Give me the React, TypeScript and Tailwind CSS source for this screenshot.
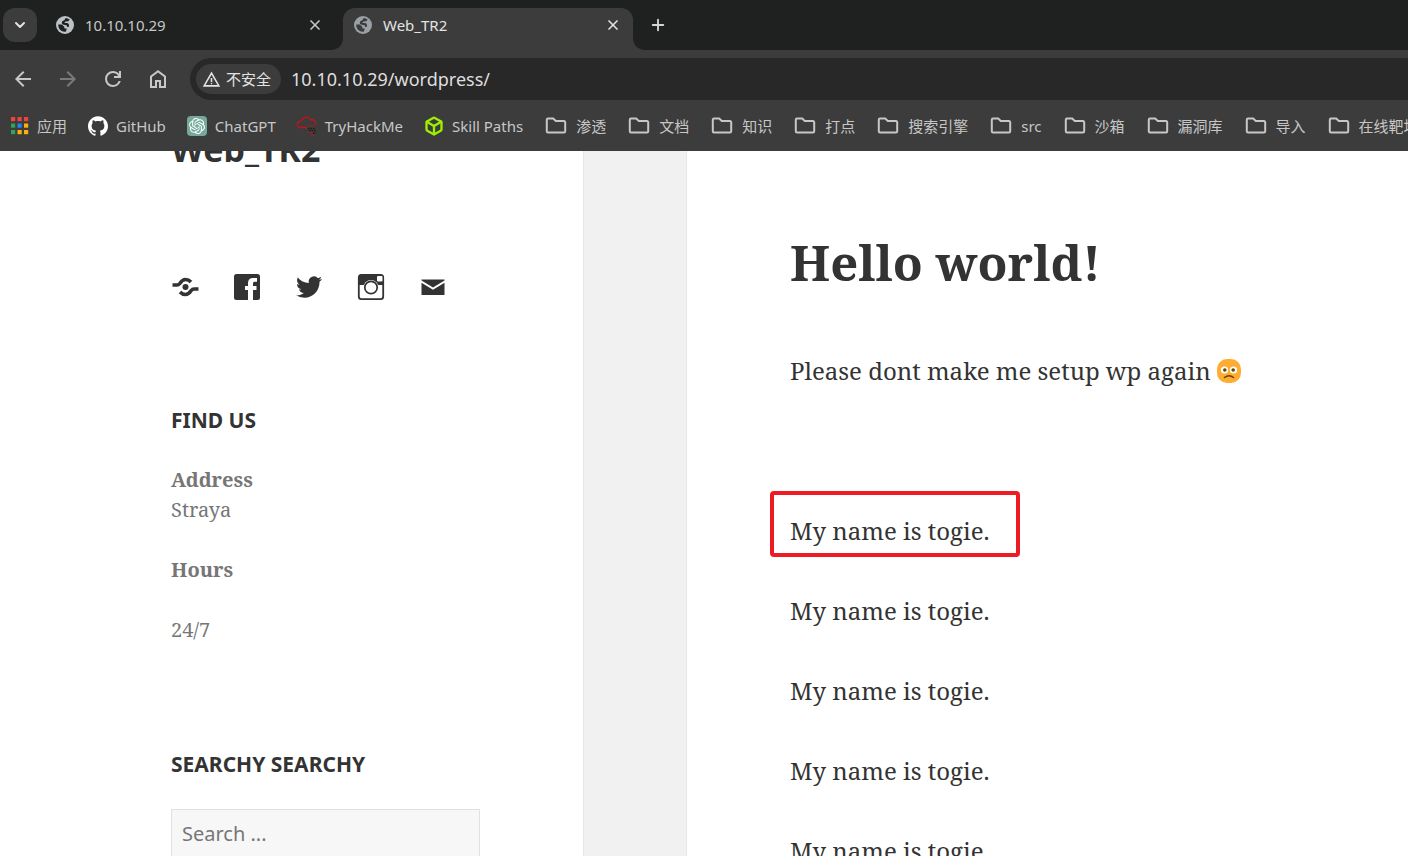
import { useId, type ReactNode } from "react";
import { Box, ChevronDown, Plus, X } from "lucide-react";
import { SiGithub, SiOpenai } from "react-icons/si";

const uiFont = "font-['Noto_Sans','Noto_Sans_CJK_SC',sans-serif]";
const serif = "font-['Noto_Serif','DejaVu_Serif',serif]";

function Symbol({ d, className }: { d: string; className?: string }) {
  return (
    <svg viewBox="0 -960 960 960" fill="currentColor" className={className} aria-hidden="true">
      <path d={d} />
    </svg>
  );
}

const paths = {
  back: "m313-440 224 224-57 56-320-320 320-320 57 56-224 224h487v80H313Z",
  forward: "M647-440H160v-80h487L423-744l57-56 320 320-320 320-57-56 224-224Z",
  reload:
    "M480-160q-134 0-227-93t-93-227q0-134 93-227t227-93q69 0 132 28.5T720-690v-110h80v280H520v-80h168q-32-56-87.5-88T480-720q-100 0-170 70t-70 170q0 100 70 170t170 70q77 0 139-44t87-116h84q-28 106-114 173t-196 67Z",
  home: "M240-200h120v-240h240v240h120v-360L480-740 240-560v360Zm-80 80v-480l320-240 320 240v480H520v-240h-80v240H160Z",
  warning:
    "m40-120 440-760 440 760H40Zm138-80h604L480-720 178-200Zm302-40q17 0 28.500-11.500T520-280q0-17-11.500-28.500T480-320q-17 0-28.500 11.500T440-280q0 17 11.500 28.500T480-240Zm-40-120h80v-200h-80v200Z",
};

function Globe({ className }: { className?: string }) {
  const id = useId();
  return (
    <svg viewBox="0 0 18 18" className={className} aria-hidden="true">
      <mask id={id}>
        <rect width="18" height="18" fill="#fff" />
        <path d="M9.200 2.200C11 2 12.800 2.700 13.800 3.600L12.200 5.200 9.500 5.600 8.300 7H11c1.300.2 2 1 2 2.200v1.300L11 11.200V9.500L6.800 8.600C5.600 8 5.600 6.200 6.300 5.200L8.600 4Z" fill="#000" />
        <path d="M2.200 8.600h3.600L8.300 10.800v1.500l2.500.4-1 3C5.500 16.200 2.200 13.200 2.200 8.600Z" fill="#000" />
      </mask>
      <circle cx="9" cy="9" r="9" fill="currentColor" mask={`url(#${id})`} />
    </svg>
  );
}

function TabFoot({ side }: { side: "left" | "right" }) {
  return (
    <svg viewBox="0 0 12 12" className="size-3 shrink-0 self-end fill-[#3c3c3c]" aria-hidden="true">
      <path d={side === "left" ? "M12 0v12H0C7 12 12 7 12 0Z" : "M0 0v12h12C5 12 0 7 0 0Z"} />
    </svg>
  );
}

function FolderIcon() {
  return (
    <svg viewBox="0 0 22 20" className="h-5 w-[22px] shrink-0" fill="none" stroke="currentColor" strokeWidth="2" aria-hidden="true">
      <path d="M3 2.500h5.200l2.600 2.500H19a1.200 1.200 0 0 1 1.200 1.200v9.100a1.200 1.200 0 0 1-1.200 1.200H3a1.200 1.200 0 0 1-1.200-1.200V3.700A1.200 1.200 0 0 1 3 2.500Z" />
    </svg>
  );
}

function AppsIcon() {
  const colors = ["#f0443a", "#f0443a", "#f0443a", "#2fa455", "#2186f3", "#fcb10a", "#2fa455", "#fcb10a", "#fcb10a"];
  return (
    <svg viewBox="0 0 20 20" className="size-5 shrink-0" aria-hidden="true">
      {colors.map((c, i) => (
        <rect key={i} x={2 + (i % 3) * 6.5} y={1 + Math.floor(i / 3) * 6.5} width="4.200" height="4.200" fill={c} />
      ))}
    </svg>
  );
}

function CloudIcon() {
  return (
    <svg viewBox="0 0 20 20" className="size-5 shrink-0" fill="none" stroke="#c4121b" aria-hidden="true">
      <path strokeWidth="1.300" d="M10 11.500H3.500A3 3 0 0 1 3 5.500 3 3 0 0 1 5 4 4.600 4.600 0 0 1 13.500 4 4 4 0 0 1 18.800 8.500" />
      <path strokeWidth="1" strokeDasharray="2 .8" d="M11 10h8M10.500 16.500h5M14 19h4" />
      <path strokeWidth="1.300" strokeDasharray="1.500 1" stroke="#1e1e1e" d="M11 12.500h7M12 14.500h7M16 17h3" />
    </svg>
  );
}

const sites: { label: string; icon: ReactNode }[] = [
  { label: "应用", icon: <AppsIcon /> },
  { label: "GitHub", icon: <SiGithub className="size-5 shrink-0 text-white" /> },
  {
    label: "ChatGPT",
    icon: (
      <span className="flex size-5 shrink-0 items-center justify-center rounded-sm bg-[#74a99b]">
        <SiOpenai className="size-4 text-white" />
      </span>
    ),
  },
  { label: "TryHackMe", icon: <CloudIcon /> },
  { label: "Skill Paths", icon: <Box className="size-5 shrink-0 text-[#9fef00]" strokeWidth={2.8} /> },
];

const folders = ["渗透", "文档", "知识", "打点", "搜索引擎", "src", "沙箱", "漏洞库", "导入", "在线靶场"];

function TabStrip() {
  return (
    <div className="flex h-[50px] shrink-0 items-stretch bg-[#1f2120] text-[15px] text-[#c7c7c7]">
      <button aria-label="Search tabs" className="ml-[3px] mt-2 flex size-[34px] items-center justify-center rounded-xl bg-[#3c3c3c] text-[#e3e3e3]">
        <ChevronDown className="size-4" strokeWidth={3} />
      </button>
      <div className="flex w-[294px] items-center gap-[11px] pl-[19px] pr-2">
        <Globe className="size-[18px] shrink-0 text-[#bdc1c6]" />
        <span className="flex-1">10.10.10.29</span>
        <button aria-label="Close 10.10.10.29">
          <X className="size-4" strokeWidth={2.5} />
        </button>
      </div>
      <TabFoot side="left" />
      <div className="mt-2 flex w-[290px] items-center gap-[11px] rounded-t-xl bg-[#3c3c3c] pb-2 pl-[11px] pr-3 text-[#e3e3e3]">
        <Globe className="size-[18px] shrink-0 text-[#9aa0a6]" />
        <span className="flex-1">Web_TR2</span>
        <button aria-label="Close Web_TR2">
          <X className="size-4" strokeWidth={2.5} />
        </button>
      </div>
      <TabFoot side="right" />
      <button aria-label="New tab" className="ml-1 text-[#d5d5d5]">
        <Plus className="size-[18px]" strokeWidth={2.5} />
      </button>
    </div>
  );
}

function Toolbar() {
  return (
    <div className="flex h-[58px] shrink-0 items-center pl-[11px] text-[#c7c7c7]">
      <div className="flex items-center gap-[21px]">
        <button aria-label="Back"><Symbol d={paths.back} className="size-6" /></button>
        <button aria-label="Forward" className="text-[#7a7a7a]"><Symbol d={paths.forward} className="size-6" /></button>
        <button aria-label="Reload"><Symbol d={paths.reload} className="size-6" /></button>
        <button aria-label="Home"><Symbol d={paths.home} className="size-6" /></button>
      </div>
      <div className="ml-5 flex h-[42px] flex-1 items-center rounded-l-full bg-[#282828] pl-[6px]">
        <button className="flex h-[30px] shrink-0 items-center gap-[5px] rounded-full bg-[#3c3c3c] pl-[6px] pr-[10px] text-[15px] text-[#e3e3e3]">
          <Symbol d={paths.warning} className="size-[19px]" />
          不安全
        </button>
        <input
          aria-label="Address"
          defaultValue="10.10.10.29/wordpress/"
          className="ml-[10px] min-w-0 flex-1 bg-transparent text-lg text-[#dedede] outline-none"
        />
      </div>
    </div>
  );
}

function Bookmarks() {
  return (
    <nav aria-label="Bookmarks" className="flex h-[43px] shrink-0 items-center gap-[22px] overflow-hidden whitespace-nowrap pb-[7px] pl-[9px] text-[15px] text-[#c7c7c7]">
      <div className="flex items-center gap-[21px]">
        {sites.map((s) => (
          <a key={s.label} href="#" className="flex items-center gap-2">
            {s.icon}
            {s.label}
          </a>
        ))}
      </div>
      {folders.map((f) => (
        <button key={f} className="flex shrink-0 items-center gap-[9px]">
          <FolderIcon />
          {f}
        </button>
      ))}
    </nav>
  );
}

const social: { label: string; art: ReactNode }[] = [
  {
    label: "Share",
    art: (
      <>
        <circle cx="14.500" cy="14" r="3" />
        <path fill="none" stroke="currentColor" strokeWidth="3.600" d="M1.500 12H6c1.500 0 2-.5 2.800-1.500C10.300 8.200 12 6.500 14.500 6.500c2.200 0 4 .9 5.500 2.500M27.500 16H23c-1.500 0-2 .5-2.800 1.500C18.700 19.800 17 21.500 14.500 21.500c-2.200 0-4-.9-5.500-2.500" />
      </>
    ),
  },
  {
    label: "Facebook",
    art: <path d="M3.500 1h21A2.500 2.500 0 0 1 27 3.500v21a2.500 2.500 0 0 1-2.500 2.500H20V17h3.500v-4H20v-2.500c0-1.200.6-1.700 1.800-1.700H24V5h-3.800c-3.400 0-5.200 1.900-5.200 5v3h-3v4h3v10H3.500A2.500 2.500 0 0 1 1 24.500v-21A2.500 2.500 0 0 1 3.500 1Z" />,
  },
  {
    label: "Twitter",
    art: (
      <path
        transform="translate(1 1) scale(1.090)"
        d="M23.953 4.570a10 10 0 0 1-2.825.775 4.958 4.958 0 0 0 2.163-2.723c-.951.555-2.005.959-3.127 1.184a4.920 4.920 0 0 0-8.384 4.482C7.690 8.095 4.067 6.130 1.640 3.162a4.822 4.822 0 0 0-.666 2.475c0 1.710.870 3.213 2.188 4.096a4.904 4.904 0 0 1-2.228-.616v.060a4.923 4.923 0 0 0 3.946 4.827 4.996 4.996 0 0 1-2.212.085 4.936 4.936 0 0 0 4.604 3.417 9.867 9.867 0 0 1-6.102 2.105c-.390 0-.779-.023-1.170-.067a13.995 13.995 0 0 0 7.557 2.209c9.053 0 13.998-7.496 13.998-13.985 0-.210 0-.420-.015-.630A9.935 9.935 0 0 0 24 4.590Z"
      />
    ),
  },
  {
    label: "Instagram",
    art: (
      <>
        <rect x="1.800" y="1.800" width="24.400" height="24.400" rx="2.600" fill="none" stroke="currentColor" strokeWidth="1.800" />
        <path d="M1.500 12V4A2.500 2.500 0 0 1 4 1.500h20A2.500 2.500 0 0 1 26.500 4v8Z" />
        <circle cx="14" cy="14.500" r="7.600" fill="#fff" />
        <circle cx="14" cy="14.500" r="6.200" fill="none" stroke="currentColor" strokeWidth="1.700" />
        <rect x="20" y="3" width="5.500" height="5.500" rx="1" fill="#fff" />
      </>
    ),
  },
  {
    label: "Email",
    art: (
      <>
        <path d="M2.500 6.500h23v1L14 14.500 2.500 7.500Z" />
        <path d="M2.500 9.800 14 16.800l11.500-7V22h-23Z" />
      </>
    ),
  },
];

function Sidebar() {
  return (
    <aside className="flex flex-col pl-[171px] pr-[103px] text-[#333]">
      <h1 className="-mt-6 font-['Noto_Sans',sans-serif] text-[34px]/[44px] font-bold">Web_TR2</h1>
      <nav aria-label="Social links" className="mt-[102px] flex gap-[34px]">
        {social.map((s) => (
          <a key={s.label} href="#" aria-label={s.label}>
            <svg viewBox="0 0 28 28" fill="currentColor" className="size-7" aria-hidden="true">
              {s.art}
            </svg>
          </a>
        ))}
      </nav>
      <section className="mt-[104px]">
        <h2 className="font-['Noto_Sans',sans-serif] text-[21px]/[30px] font-bold">FIND US</h2>
        <div className={`mt-[30px] text-xl/[30px] text-[#767676] ${serif}`}>
          <p><strong>Address</strong><br />Straya</p>
          <p className="mt-[30px]"><strong>Hours</strong></p>
          <p className="mt-[30px]">24/7</p>
        </div>
      </section>
      <section className="mt-[104px]">
        <h2 className="font-['Noto_Sans',sans-serif] text-[21px]/[30px] font-bold">SEARCHY SEARCHY</h2>
        <input
          type="search"
          aria-label="Search"
          placeholder="Search ..."
          className="mt-[30px] h-12 w-full border border-[#e1e1e1] bg-[#f7f7f7] px-[10px] font-['Noto_Sans',sans-serif] text-xl placeholder:text-[#767676]"
        />
      </section>
    </aside>
  );
}

function Post() {
  return (
    <article className={`pl-[103px] pt-[76px] text-2xl/[40px] text-[#333] ${serif}`}>
      <h1 className="text-[49px]/[70px] font-bold">Hello world!</h1>
      <p className="mt-[54px] flex items-center gap-[6px]">
        Please dont make me setup wp again
        <svg viewBox="0 0 24 24" className="size-6" role="img" aria-label="Frowning face">
          <rect width="24" height="24" rx="10" fill="#ffac33" />
          <circle cx="7.500" cy="11" r="3.600" fill="#fff" />
          <circle cx="16.500" cy="11" r="3.600" fill="#fff" />
          <circle cx="7.800" cy="11" r="1.800" fill="#664500" />
          <circle cx="16.200" cy="11" r="1.800" fill="#664500" />
          <path d="M7.500 18.500q4.500-3.500 9 0" fill="none" stroke="#664500" strokeWidth="1.500" strokeLinecap="round" />
        </svg>
      </p>
      <div className="relative mt-[120px]">
        <div className="absolute -left-5 -top-5 h-[66px] w-[250px] rounded-sm border-4 border-[#ed1c24]" />
        <p>My name is togie.</p>
      </div>
      {[0, 1, 2, 3].map((i) => (
        <p key={i} className="mt-10">My name is togie.</p>
      ))}
    </article>
  );
}

export default function App() {
  return (
    <div className={`flex h-screen flex-col overflow-hidden bg-white ${uiFont}`}>
      <header className="flex flex-col bg-[#3c3c3c]">
        <TabStrip />
        <Toolbar />
        <Bookmarks />
      </header>
      <main className="grid min-h-0 flex-1 grid-cols-[583px_104px_1fr] overflow-hidden">
        <Sidebar />
        <div className="border-x border-[#e7e7e7] bg-[#f1f1f1]" />
        <Post />
      </main>
    </div>
  );
}
